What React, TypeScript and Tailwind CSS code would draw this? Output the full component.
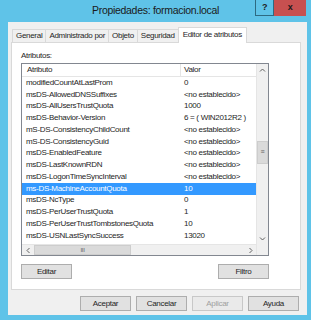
import type { JSX } from 'react';

const rows: [string, string][] = [
  ['modifiedCountAtLastProm', '0'],
  ['msDS-AllowedDNSSuffixes', '<no establecido>'],
  ['msDS-AllUsersTrustQuota', '1000'],
  ['msDS-Behavior-Version', '6 = ( WIN2012R2 )'],
  ['mS-DS-ConsistencyChildCount', '<no establecido>'],
  ['mS-DS-ConsistencyGuid', '<no establecido>'],
  ['msDS-EnabledFeature', '<no establecido>'],
  ['msDS-LastKnownRDN', '<no establecido>'],
  ['msDS-LogonTimeSyncInterval', '<no establecido>'],
  ['ms-DS-MachineAccountQuota', '10'],
  ['msDS-NcType', '0'],
  ['msDS-PerUserTrustQuota', '1'],
  ['msDS-PerUserTrustTombstonesQuota', '10'],
  ['msDS-USNLastSyncSuccess', '13020'],
];

const tabs = ['General', 'Administrado por', 'Objeto', 'Seguridad'];

// flecha de barra de desplazamiento, rotada según la dirección
function Chevron({ rotate }: { rotate: number }): JSX.Element {
  return (
    <svg width="7" height="7" viewBox="0 0 7 7" style={{ transform: `rotate(${rotate}deg)` }}>
      <path d="M1 4.5 L3.5 2 L6 4.5" fill="none" stroke="#606060" strokeWidth="1" />
    </svg>
  );
}

function Button({ label, disabled }: { label: string; disabled?: boolean }): JSX.Element {
  return (
    <div
      className={`flex h-[15px] w-[51px] shrink-0 items-center justify-center border ${
        disabled ? 'border-[#c8c8c8] bg-[#eaeaea] text-[#a0a0a0]' : 'border-[#adadad] bg-[#e1e1e1] text-[#1e1e1e]'
      }`}
    >
      {label}
    </div>
  );
}

export default function App(): JSX.Element {
  return (
    <div
      className="flex h-[320px] w-[311px] flex-col bg-[#5fc3e8] text-[8px] tracking-[-0.3px] text-[#1e1e1e]"
      style={{ fontFamily: '"Liberation Sans", Arial, sans-serif' }}
    >
      {/* barra de título */}
      <div className="relative flex h-[22px] items-center justify-center">
        <span className="text-[10.5px] tracking-[-0.3px] text-[#1a1a1a]">Propiedades: formacion.local</span>
        <div className="absolute right-[5px] top-0 flex h-[16px]">
          <div className="flex w-[19px] items-center justify-center border border-t-0 border-[#2d6a82] text-[9px] font-bold">
            ?
          </div>
          <div className="flex w-[32px] items-center justify-center bg-[#c75050] text-[9px] font-bold text-[#1a1a1a]">
            x
          </div>
        </div>
      </div>

      {/* área cliente */}
      <div className="mb-[5px] ml-[8px] mr-[4px] flex flex-1 flex-col bg-[#f0f0f0]">
        <div className="flex items-end pl-[4px] pt-[5px]">
          {tabs.map((t) => (
            <div
              key={t}
              className="-mr-px flex h-[13px] items-center border border-b-0 border-[#d9d9d9] bg-[#f0f0f0] px-[3px]"
            >
              {t}
            </div>
          ))}
          <div className="relative z-10 -mb-px flex h-[16px] items-center border border-b-0 border-[#d9d9d9] bg-white px-[4px] pb-[2px]">
            Editor de atributos
          </div>
        </div>

        <div className="ml-[3px] mr-[6px] h-[248px] border border-[#d9d9d9] bg-white pl-[9px] pt-[7px]">
          <div className="flex w-[248px] flex-col">
            <span className="h-[13px]">Atributos:</span>

            <div className="flex h-[193px] border border-[#828790] bg-white">
              <div className="flex min-w-0 flex-1 flex-col">
                <div className="flex h-[13px] shrink-0 items-center border-b border-[#e5e5e5]">
                  <span className="w-[159px] border-r border-[#e5e5e5] pl-[5px]">Atributo</span>
                  <span className="pl-[3px]">Valor</span>
                </div>
                <div className="flex-1 overflow-hidden">
                  {rows.map(([name, value]) => {
                    const sel = name === 'ms-DS-MachineAccountQuota';
                    return (
                      <div
                        key={name}
                        className={`flex h-[11.75px] items-center ${sel ? 'bg-[#3399ff] text-white' : ''}`}
                      >
                        <span className="w-[159px] shrink-0 whitespace-nowrap pl-[4px]">{name}</span>
                        <span className="whitespace-nowrap pl-[3px]">{value}</span>
                      </div>
                    );
                  })}
                </div>
                {/* barra horizontal */}
                <div className="flex h-[11px] shrink-0 border-t border-[#e5e5e5] bg-[#f0f0f0]">
                  <div className="flex w-[12px] items-center justify-center">
                    <Chevron rotate={-90} />
                  </div>
                  <div className="flex w-[97px] items-center justify-center border border-[#cdcdcd] bg-[#dadada] text-[6px] text-[#606060]">
                    III
                  </div>
                  <div className="flex-1" />
                  <div className="flex w-[12px] items-center justify-center">
                    <Chevron rotate={90} />
                  </div>
                </div>
              </div>
              {/* barra vertical */}
              <div className="flex w-[12px] shrink-0 flex-col border-l border-[#e5e5e5] bg-[#f0f0f0]">
                <div className="flex h-[13px] items-center justify-center">
                  <Chevron rotate={0} />
                </div>
                <div className="h-[64px]" />
                <div className="flex h-[23px] items-center justify-center border border-[#cdcdcd] bg-[#dadada] text-[7px] text-[#606060]">
                  ≡
                </div>
                <div className="flex-1" />
                <div className="flex h-[12px] items-center justify-center">
                  <Chevron rotate={180} />
                </div>
                <div className="h-[11px] bg-[#f0f0f0]" />
              </div>
            </div>

            <div className="mt-[8px] flex justify-between">
              <Button label="Editar" />
              <Button label="Filtro" />
            </div>
          </div>
        </div>

        <div className="mt-[6px] flex justify-end gap-[5px] pr-[8px]">
          <Button label="Aceptar" />
          <Button label="Cancelar" />
          <Button label="Aplicar" disabled />
          <Button label="Ayuda" />
        </div>
      </div>
    </div>
  );
}
